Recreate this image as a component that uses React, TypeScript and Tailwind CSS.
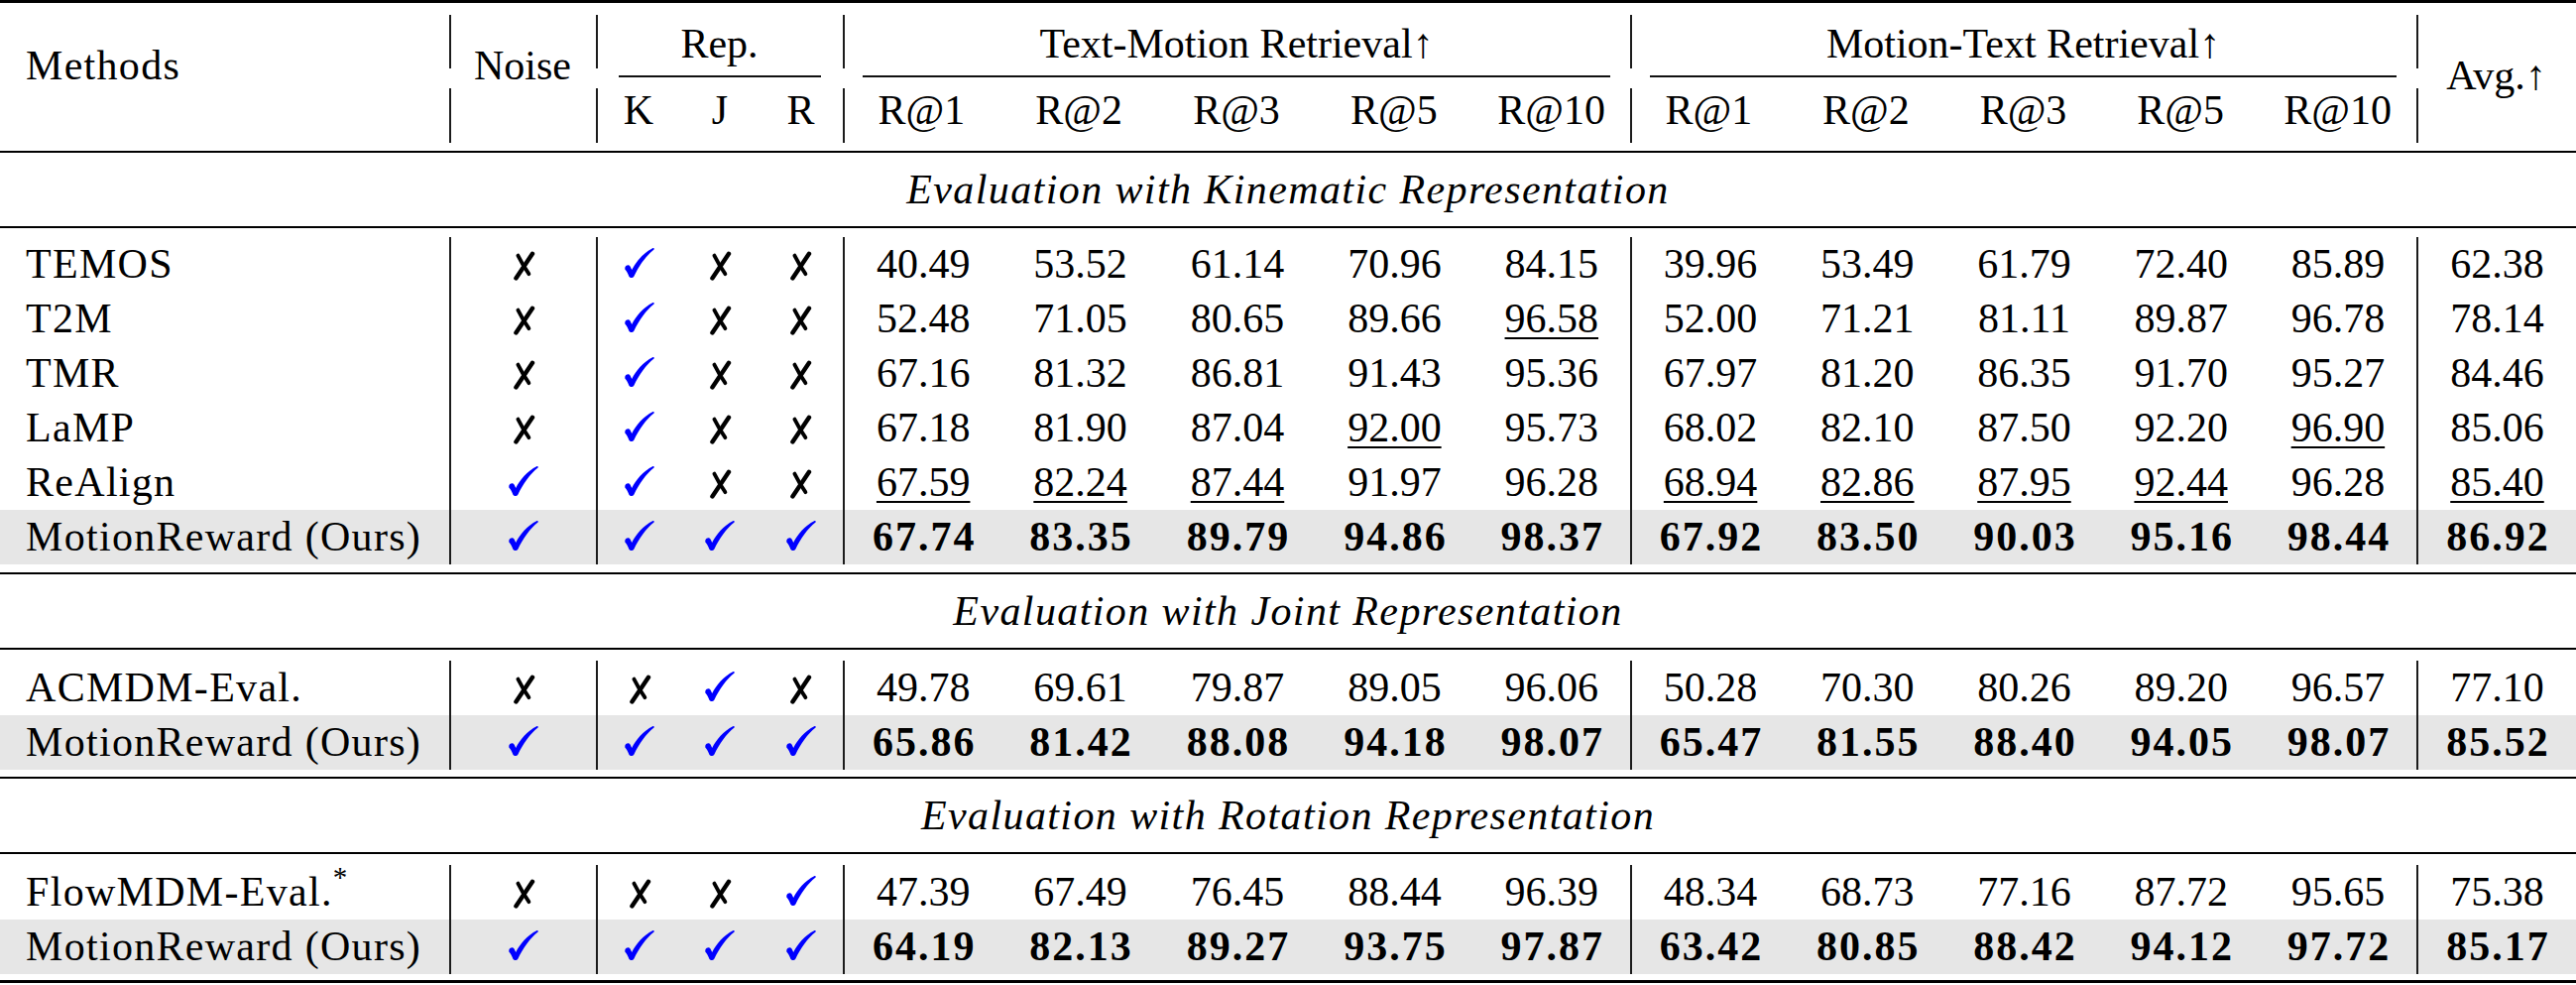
import React from "react";

const COLS = "grid grid-cols-[453px_148px_249px_794px_793px_161px]";
const LINE = "border-l-2 border-[#1c1c1c]";

const Check = () => (
  <svg width="30" height="30" viewBox="0 0 30 30" className="-translate-y-[2px]">
    <path
      d="M0.3 19.8C1.6 16.8 4.6 16.6 5.8 19L7.2 22C11.6 13.6 18.4 5.2 28.6 0C29.4 -0.2 30 0.6 29.6 1.4C21.4 8 14.6 17.4 9.4 28.6C8.6 30.4 5.2 30.6 4.4 28.8C3.4 26 2 23 0.3 21.4Z"
      fill="#0000ff"
    />
  </svg>
);

const Cross = () => (
  <svg width="23" height="30" viewBox="0 0 23 30" className="translate-y-[1px]">
    <path d="M20 2.8C15.4 9.6 9.6 18.2 3.4 27.4" stroke="#000" strokeWidth="4.4" strokeLinecap="round" fill="none" />
    <path d="M5.4 4.6C8.4 10.6 12 16.8 16.4 23.2" stroke="#000" strokeWidth="3.8" strokeLinecap="round" fill="none" />
  </svg>
);

const Mark = ({ v }: { v: string }) => (v === "y" ? <Check /> : <Cross />);

// "_" prefix = underlined (second best), "*" prefix = bold (best)
const Val = ({ s }: { s: string }) => {
  if (s.startsWith("*")) return <span className="font-bold tracking-[2px] pl-[2px]">{s.slice(1)}</span>;
  if (s.startsWith("_"))
    return <span className="underline decoration-[1.6px] underline-offset-[5px]">{s.slice(1)}</span>;
  return <span>{s}</span>;
};

type RowData = {
  name: React.ReactNode;
  noise: string;
  rep: string[];
  tm: string[];
  mt: string[];
  avg: string;
  gray?: boolean;
};

const blocks: { title: string; pad: string; rows: RowData[] }[] = [
  {
    title: "Evaluation with Kinematic Representation",
    pad: "pt-[9px] pb-[8px]",
    rows: [
      { name: "TEMOS", noise: "n", rep: ["y", "n", "n"], tm: ["40.49", "53.52", "61.14", "70.96", "84.15"], mt: ["39.96", "53.49", "61.79", "72.40", "85.89"], avg: "62.38" },
      { name: "T2M", noise: "n", rep: ["y", "n", "n"], tm: ["52.48", "71.05", "80.65", "89.66", "_96.58"], mt: ["52.00", "71.21", "81.11", "89.87", "96.78"], avg: "78.14" },
      { name: "TMR", noise: "n", rep: ["y", "n", "n"], tm: ["67.16", "81.32", "86.81", "91.43", "95.36"], mt: ["67.97", "81.20", "86.35", "91.70", "95.27"], avg: "84.46" },
      { name: "LaMP", noise: "n", rep: ["y", "n", "n"], tm: ["67.18", "81.90", "87.04", "_92.00", "95.73"], mt: ["68.02", "82.10", "87.50", "92.20", "_96.90"], avg: "85.06" },
      { name: "ReAlign", noise: "y", rep: ["y", "n", "n"], tm: ["_67.59", "_82.24", "_87.44", "91.97", "96.28"], mt: ["_68.94", "_82.86", "_87.95", "_92.44", "96.28"], avg: "_85.40" },
      { name: "MotionReward (Ours)", noise: "y", rep: ["y", "y", "y"], tm: ["*67.74", "*83.35", "*89.79", "*94.86", "*98.37"], mt: ["*67.92", "*83.50", "*90.03", "*95.16", "*98.44"], avg: "*86.92", gray: true },
    ],
  },
  {
    title: "Evaluation with Joint Representation",
    pad: "pt-[11px] pb-[7px]",
    rows: [
      { name: "ACMDM-Eval.", noise: "n", rep: ["n", "y", "n"], tm: ["49.78", "69.61", "79.87", "89.05", "96.06"], mt: ["50.28", "70.30", "80.26", "89.20", "96.57"], avg: "77.10" },
      { name: "MotionReward (Ours)", noise: "y", rep: ["y", "y", "y"], tm: ["*65.86", "*81.42", "*88.08", "*94.18", "*98.07"], mt: ["*65.47", "*81.55", "*88.40", "*94.05", "*98.07"], avg: "*85.52", gray: true },
    ],
  },
  {
    title: "Evaluation with Rotation Representation",
    pad: "pt-[11px] pb-[6px]",
    rows: [
      {
        name: (
          <>
            FlowMDM-Eval.<sup className="text-[29px]">*</sup>
          </>
        ),
        noise: "n",
        rep: ["n", "n", "y"],
        tm: ["47.39", "67.49", "76.45", "88.44", "96.39"],
        mt: ["48.34", "68.73", "77.16", "87.72", "95.65"],
        avg: "75.38",
      },
      { name: "MotionReward (Ours)", noise: "y", rep: ["y", "y", "y"], tm: ["*64.19", "*82.13", "*89.27", "*93.75", "*97.87"], mt: ["*63.42", "*80.85", "*88.42", "*94.12", "*97.72"], avg: "*85.17", gray: true },
    ],
  },
];

const Row = ({ r }: { r: RowData }) => (
  <div className={`${COLS} h-[55px] ${r.gray ? "bg-[#e6e6e6]" : ""}`}>
    <div className="flex items-center pl-[26px] pb-[2px] tracking-[1.3px]">{r.name}</div>
    <div className={`flex items-center justify-center ${LINE}`}>
      <Mark v={r.noise} />
    </div>
    <div className={`grid grid-cols-[84px_78px_85px] ${LINE}`}>
      {r.rep.map((m, i) => (
        <div key={i} className="flex items-center justify-center">
          <Mark v={m} />
        </div>
      ))}
    </div>
    <div className={`grid grid-cols-5 ${LINE}`}>
      {r.tm.map((v, i) => (
        <div key={i} className="flex items-center justify-center pb-[2px]">
          <Val s={v} />
        </div>
      ))}
    </div>
    <div className={`grid grid-cols-5 ${LINE}`}>
      {r.mt.map((v, i) => (
        <div key={i} className="flex items-center justify-center pb-[2px]">
          <Val s={v} />
        </div>
      ))}
    </div>
    <div className={`flex items-center justify-center pb-[2px] ${LINE}`}>
      <Val s={r.avg} />
    </div>
  </div>
);

const Header = () => {
  const segCols = ["col-start-2", "col-start-3", "col-start-4", "col-start-5", "col-start-6"];
  return (
    <div className={`${COLS} grid-rows-[54px_20px_55px]`}>
      <div className="col-start-1 row-start-1 row-span-3 pl-[26px] pt-[30px] tracking-[1.3px]">Methods</div>
      <div className="col-start-2 row-start-1 row-span-3 text-center pt-[30px]">Noise</div>
      <div className="col-start-6 row-start-1 row-span-3 text-center pt-[40px]">Avg.↑</div>

      <div className="col-start-3 row-start-1 text-center pt-[8px]">Rep.</div>
      <div className="col-start-4 row-start-1 text-center pt-[8px]">Text-Motion Retrieval↑</div>
      <div className="col-start-5 row-start-1 text-center pt-[8px]">Motion-Text Retrieval↑</div>

      <div className="col-start-3 row-start-2 pt-[7px] pl-[23px] pr-[22px]">
        <div className="h-[2px] bg-[#111]" />
      </div>
      <div className="col-start-4 row-start-2 pt-[7px] px-[20px]">
        <div className="h-[2px] bg-[#111]" />
      </div>
      <div className="col-start-5 row-start-2 pt-[7px] px-[20px]">
        <div className="h-[2px] bg-[#111]" />
      </div>

      <div className="col-start-3 row-start-3 grid grid-cols-[86px_78px_85px] pt-[1px]">
        {["K", "J", "R"].map((k) => (
          <div key={k} className="text-center">
            {k}
          </div>
        ))}
      </div>
      <div className="col-start-4 row-start-3 grid grid-cols-5 pt-[1px]">
        {["R@1", "R@2", "R@3", "R@5", "R@10"].map((k) => (
          <div key={k} className="text-center">
            {k}
          </div>
        ))}
      </div>
      <div className="col-start-5 row-start-3 grid grid-cols-5 pt-[1px]">
        {["R@1", "R@2", "R@3", "R@5", "R@10"].map((k) => (
          <div key={k} className="text-center">
            {k}
          </div>
        ))}
      </div>

      {segCols.map((c) => (
        <React.Fragment key={c}>
          <div className={`${c} row-start-1 ${LINE}`} />
          <div className={`${c} row-start-3 ${LINE}`} />
        </React.Fragment>
      ))}
    </div>
  );
};

export default function App() {
  return (
    <div className="w-[2598px] bg-white text-black [font-family:'Liberation_Serif',serif] text-[42px] leading-[42px]">
      <div className="h-[3px] bg-black" />
      <div className="pt-[12px] pb-[8px]">
        <Header />
      </div>
      {blocks.map((b, bi) => (
        <div key={b.title}>
          <div className="h-[2px] bg-black" />
          <div className="h-[74px] flex items-center justify-center italic tracking-[1.4px]">{b.title}</div>
          <div className="h-[2px] bg-black" />
          <div className={b.pad}>
            {b.rows.map((r, i) => (
              <Row key={i} r={r} />
            ))}
          </div>
          {bi === blocks.length - 1 && <div className="h-[3px] bg-black" />}
        </div>
      ))}
    </div>
  );
}
